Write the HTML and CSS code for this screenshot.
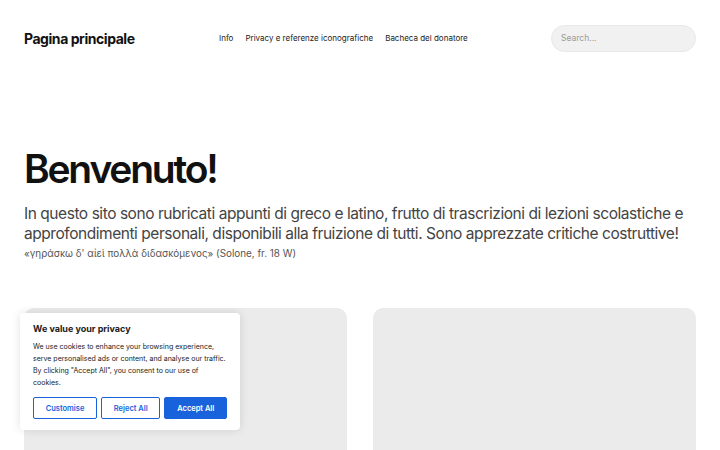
FILE: index.html
```html
<!DOCTYPE html>
<html lang="it">
<head>
<meta charset="utf-8">
<title>Pagina principale</title>
<link rel="stylesheet" href="styles.css">
</head>
<body>
<header class="site-header">
  <a class="site-title" href="#">Pagina principale</a>
  <nav class="nav">
    <a href="#">Info</a>
    <a href="#">Privacy e referenze iconografiche</a>
    <a href="#">Bacheca del donatore</a>
  </nav>
  <div class="search"><span class="search-ph">Search...</span></div>
</header>
<main class="main">
  <h1 class="hero-title">Benvenuto!</h1>
  <p class="lead">In questo sito sono rubricati appunti di greco e latino, frutto di trascrizioni di lezioni scolastiche e approfondimenti personali, disponibili alla fruizione di tutti. Sono apprezzate critiche costruttive!</p>
  <p class="quote">«γηράσκω δ' αἰεὶ πολλὰ διδασκόμενος» (Solone, fr. 18 W)</p>
  <div class="cards">
    <div class="card"></div>
    <div class="card"></div>
  </div>
</main>
<div class="cookie">
  <p class="cookie-title">We value your privacy</p>
  <p class="cookie-text">We use cookies to enhance your browsing experience, serve personalised ads or content, and analyse our traffic. By clicking "Accept All", you consent to our use of cookies.</p>
  <div class="cookie-btns">
    <button class="btn btn-outline">Customise</button>
    <button class="btn btn-outline">Reject All</button>
    <button class="btn btn-solid">Accept All</button>
  </div>
</div>
</body>
</html>
```
FILE: styles.css
```css
* { box-sizing: border-box; }
html, body { margin: 0; padding: 0; }
body {
  font-family: Inter, "Noto Sans", "DejaVu Sans", sans-serif;
  color: #111;
  background: #fff;
  overflow: hidden;
  height: 450px;
}
a { color: inherit; text-decoration: none; }
.site-header {
  display: flex;
  align-items: center;
  height: 76px;
  padding: 0 24px;
}
.site-title {
  font-weight: 700;
  font-size: 14px;
  letter-spacing: -0.45px;
  width: 195px;
}
.nav {
  display: flex;
  gap: 12px;
  font-size: 8px;
  color: #222;
  flex: 1;
}
.search {
  width: 145px;
  height: 27px;
  border-radius: 14px;
  background: #f1f1f1;
  border: 1px solid #e8e8e8;
  display: flex;
  align-items: center;
  padding-left: 9px;
}
.search-ph { font-size: 8.5px; color: #9a9a9a; }
.main { padding: 0 24px; }
.hero-title {
  margin: 71px 0 0;
  font-size: 39px;
  font-weight: 600;
  letter-spacing: -2.2px;
  line-height: 44px;
}
.lead {
  margin: 13px 0 0;
  font-size: 15.5px;
  letter-spacing: -0.45px;
  line-height: 19.5px;
  color: #444;
}
.quote {
  margin: 3px 0 0;
  font-size: 9.9px;
  line-height: 14px;
  color: #555;
}
.cards {
  display: grid;
  grid-template-columns: 1fr 1fr;
  gap: 26px;
  margin-top: 48px;
}
.card {
  height: 200px;
  background: #ebebeb;
  border-radius: 10px;
}
.cookie {
  position: absolute;
  left: 20px;
  top: 313px;
  width: 220px;
  background: #fff;
  border-radius: 4px;
  box-shadow: 0 0 10px rgba(0,0,0,0.12);
  padding: 10px 13px 11px;
}
.cookie-title {
  margin: 0;
  font-size: 9px;
  font-weight: 700;
  color: #212121;
}
.cookie-text {
  margin: 7px 0 0;
  font-size: 7px;
  line-height: 12px;
  color: #212121;
}
.cookie-btns {
  display: flex;
  gap: 4px;
  margin-top: 8px;
}
.btn {
  font-family: inherit;
  font-size: 7.5px;
  font-weight: 600;
  height: 22px;
  border-radius: 2px;
  padding: 0 6px;
  white-space: nowrap;
  flex: 1 1 auto;
}
.btn-outline {
  background: #fff;
  color: #1863dc;
  border: 1.5px solid #1863dc;
}
.btn-solid {
  background: #1863dc;
  color: #fff;
  border: 1.5px solid #1863dc;
}
```
